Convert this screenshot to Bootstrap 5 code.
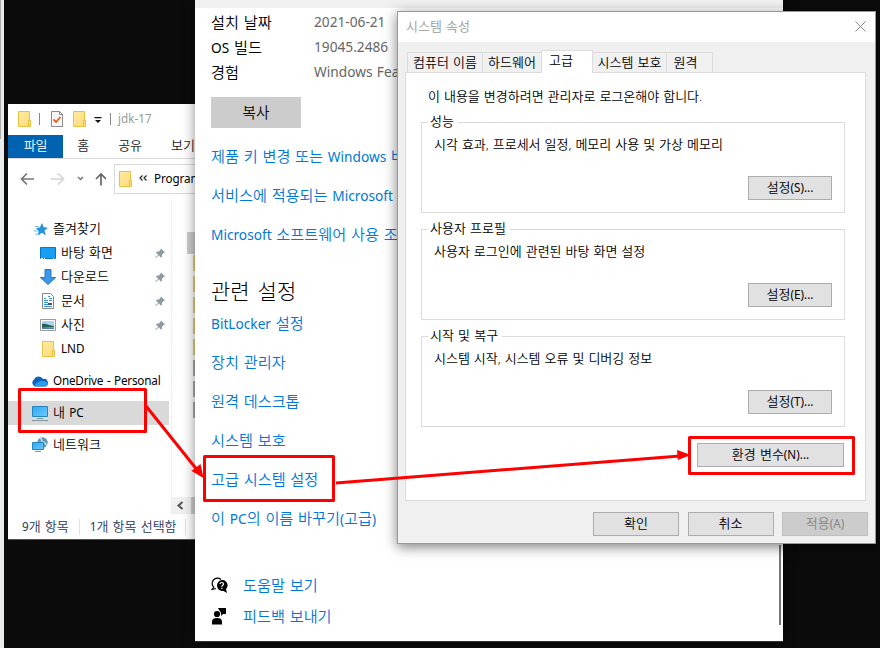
<!DOCTYPE html>
<html lang="ko">
<head>
<meta charset="utf-8">
<meta name="viewport" content="width=device-width, initial-scale=1">
<title>시스템 속성</title>
<link href="https://cdn.jsdelivr.net/npm/bootstrap@5.3.0/dist/css/bootstrap.min.css" rel="stylesheet">
<style>
html,body{height:648px;overflow:hidden}
body{font-family:"Noto Sans","Noto Sans CJK KR",sans-serif;font-size:13px;font-weight:350;line-height:1.2;color:#000;background:#0b0b0b;word-spacing:.8px;white-space:nowrap}
svg{display:block;flex:none}
.desk{width:880px;height:648px}
.edge{left:0;top:0;width:4px;height:648px;background:#e9eced}
.edge div{width:1px;height:139px;background:#aaa}
.lt{font-size:.9em;font-weight:400}
/* explorer */
.explorer{left:8px;top:104px;width:187px;height:436px;background:#fff;border-bottom:1px solid #555}
.ex-title{height:30px;color:#999}
.ex-tabs{height:24px;color:#222}
.ex-file{width:56px;height:23px;background:#0063b1;color:#fff}
.ex-addr{height:41px;border-top:1px solid #dadada}
.ex-box{width:90px;height:30px;border:1px solid #d9d9d9;border-right:0}
.ex-path{letter-spacing:-.1px;margin-bottom:2px}
.ex-side{width:164px;border-right:1px solid #f0f0f0;padding-top:18px}
.ex-row{height:24px;width:161px;padding-left:22px}
.ex-row>span{margin-bottom:1px}
.ex-sub{padding-left:32px}
.ex-name{margin-left:5px}
.ex-cloud{letter-spacing:-.2px}
.ex-on{background:#d9d9d9}
.ex-file-sel{width:8px;height:22px;background:#ccc;margin-top:33px}
.ex-item{width:2px;height:16px;margin-bottom:5px;background:#e6cf70}
.ex-doc{background:#aaa}
.ex-scroll{height:17px;background:#f0f0f0}
.ex-thumb{width:4px;background:#cdcdcd}
.ex-status{height:25px;color:#1f3b5c}
.ex-sep{width:1px;height:16px;background:#e2e2e2}
/* settings */
.setwin{left:195px;top:0;width:588px;height:642px;background:#fff;border-bottom:1px solid #333;font-size:15.2px;box-shadow:0 0 12px rgba(0,0,0,.45)}
.set-top{height:8px;background:#f0f0f0}
.set-body{padding-left:16px;padding-top:2px}
.set-info{height:25px}
.set-info>span:first-child{width:103px}
.set-val{color:#666;font-size:13.7px;font-weight:400}
.set-copy{width:90px;height:31px;background:#ccc;font-size:14.6px;margin:12px 0 9px}
.set-link{height:39px;color:#0078d7;text-decoration:none}
.set-head{font-size:21px;font-weight:300;height:36px;margin-top:20px;word-spacing:2.500px}
.set-bar{right:2px;top:545px;width:2px;height:80px;background:#777}
/* dialog */
.dlg{left:397px;top:11px;width:479px;height:533px;background:#f0f0f0;border:1px solid #999;box-shadow:0 3px 12px rgba(0,0,0,.5)}
.dlg-title{height:30px;background:#fff;color:#999;padding:0 9px 0 8px}
.dlg-tabs{height:30px;padding-left:9px}
.dlg-tab{height:20px;border:1px solid #dcdcdc;border-bottom:0;margin-right:-1px}
.dlg-tab.on{height:23px;background:#fff;position:relative;z-index:1;margin-bottom:-1px;padding:0 12px 3px 0}
.t1{width:76px}.t2{width:60px}.t3{width:52px}.t4{width:75px}.t5{width:47px;padding-right:8px}
.dlg-panel{height:429px;width:461px;margin-left:7px;border:1px solid #dcdcdc;background:#fff;padding:14px 20px 0 15px}
.dlg-intro{height:20px;padding-left:7px;word-spacing:.6px}
.grp{height:91px;width:424px;border:1px solid #dcdcdc;margin-bottom:16px;padding:0 12px 12px 12px}
.grp-name{height:18px;margin:-10px 0 0 -6px;background:#fff;padding:0 4px 0 2px;margin-right:auto}
.grp-text{margin-top:5px;height:18px;word-spacing:.6px}
.wbtn{height:24px;width:84px;border:1px solid #adadad;background:#e1e1e1}
.wide{width:147px;margin-right:1px}
.foot{width:86px}
.off{background:#ccc;border-color:#bfbfbf;color:#838383}
.marks{left:0;top:0}
</style>
<script src="https://cdn.jsdelivr.net/npm/bootstrap@5.3.0/dist/js/bootstrap.bundle.min.js"></script>
</head>
<body>
<svg width="0" height="0" class="position-absolute">
<defs>
<linearGradient id="fg" x1="0" y1="0" x2="1" y2="1"><stop offset="0" stop-color="#ffeaa3"/><stop offset="1" stop-color="#ffdb78"/></linearGradient>
<linearGradient id="sg" x1="0" y1="0" x2="1" y2="1"><stop offset="0" stop-color="#2aa9f2"/><stop offset="1" stop-color="#6fcaff"/></linearGradient>
<symbol id="folder" viewBox="0 0 13 16"><path d="M.5.5h11v9h1v6H.5z" fill="url(#fg)" stroke="#e8c341"/><path d="M10.500 15V9.500h2" fill="none" stroke="#e8c341"/></symbol>
<symbol id="pin" viewBox="0 0 11 11"><path d="M6.500 0 11 4.500 9.500 5 7.700 6.800 7.500 9.500 6.300 9.800 4 7.500.8 10.700.2 10.200 3.400 6.900 1.200 4.700 1.500 3.500 4.200 3.300 6 1.500z" fill="#8d99a1"/></symbol>
</defs></svg>
<main class="desk position-relative overflow-hidden">
<div class="edge position-absolute"><div></div></div>

<section class="explorer position-absolute d-flex flex-column overflow-hidden">
 <div class="ex-title d-flex align-items-center">
  <svg width="13" height="16" style="margin-left:10px"><use href="#folder"/></svg>
  <svg width="1" height="12" class="ms-2"><path d="M.5 0v12" stroke="#888"/></svg>
  <svg width="12" height="16" viewBox="0 0 12 16" style="margin-left:11px"><path d="M.5.5h8l3 3v12H.5z" fill="#f7f7f7" stroke="#8a8a8a"/><path d="M8.500.5v3h3" fill="none" stroke="#8a8a8a"/><path d="M2.500 8.500 5 11l4.500-5" fill="none" stroke="#e8591c" stroke-width="1.800"/></svg>
  <svg width="13" height="16" style="margin-left:10px"><use href="#folder"/></svg>
  <svg width="8" height="7" viewBox="0 0 8 7" style="margin:2px 0 0 8px"><path d="M.5 0h7v1.200h-7zM1 3h6L4 6z" fill="#111"/></svg>
  <svg width="1" height="12" style="margin-left:8px"><path d="M.5 0v12" stroke="#888"/></svg>
  <span style="margin-left:7px"><span class="lt">jdk-17</span></span>
 </div>
 <div class="ex-tabs d-flex align-items-center">
  <span class="ex-file d-flex align-items-center justify-content-center">파일</span><span style="margin-left:14px">홈</span><span style="margin-left:29px">공유</span><span style="margin-left:29px">보기</span>
 </div>
 <div class="ex-addr d-flex align-items-center">
  <svg width="98" height="20" viewBox="0 0 98 20" fill="none" stroke-width="1.700"><path d="M26 10H14M19 4.500 13.500 10l5.500 5.500" stroke="#777"/><path d="M43 10h12M50 4.500l5.500 5.500-5.500 5.500" stroke="#d5d5d5"/><path d="m70 8 2.500 2.500L75 8" stroke="#777" stroke-width="1.500"/><path d="M93 16.500V5.500M88 10l5-5 5 5" stroke="#666"/></svg>
  <div class="ex-box d-flex align-items-center" style="margin-left:8px"><svg width="13" height="16" class="ms-1"><use href="#folder"/></svg><svg width="8" height="6" viewBox="0 0 8 6" style="margin:0 7px 2px 7px" fill="none" stroke="#222" stroke-width="1.200"><path d="M3.500.5 1 3l2.500 2.500M7.500.5 5 3l2.500 2.500"/></svg><span class="lt ex-path">Program</span></div>
 </div>
 <div class="d-flex flex-grow-1">
  <div class="ex-side flex-shrink-0">
   <div class="ex-row d-flex align-items-center" style="padding-left:26px"><svg width="14" height="13" viewBox="0 0 14 13"><path d="M8 0 9.700 4.300 14 4.700 10.500 7.600 11.800 12.500 8 9.700 4 12.500 4.600 8.200 2 5.500 6 4.300z" fill="#2492dd"/><path d="M1 3.500h3.500M0 8h3M1 11h3" stroke="#63bcf3"/></svg><span class="ex-name">즐겨찾기</span></div>
   <div class="ex-row ex-sub d-flex align-items-center"><svg width="16" height="12" viewBox="0 0 16 12"><path d="M.5.5h15v11H.5z" fill="#189ff5" stroke="#0876c2"/><path d="M1 11.500h14" stroke="#fff" stroke-dasharray="2 1 1 8 1 1"/></svg><span class="ex-name">바탕 화면</span><svg width="10" height="11" class="ms-auto me-1"><use href="#pin"/></svg></div>
   <div class="ex-row ex-sub d-flex align-items-center"><svg width="16" height="16" viewBox="0 0 16 16"><path d="M5 .5h6v8h4.500L8 15.500.500 8.500H5z" fill="#3d97e8" stroke="#2079cb"/></svg><span class="ex-name">다운로드</span><svg width="10" height="11" class="ms-auto me-1"><use href="#pin"/></svg></div>
   <div class="ex-row ex-sub d-flex align-items-center"><svg width="16" height="16" viewBox="0 0 16 16"><path d="M2.500.5h8l3 3v12h-11z" fill="#fff" stroke="#888"/><path d="M4 5.500h2M8 3.500h2M4 7.500h4M9 5.500h3M4 9.500h4M9 7.500h3M4 11.500h8M4 13.500h8" stroke="#3593cc"/><path d="M8 10h4v2H8z" fill="#456"/></svg><span class="ex-name">문서</span><svg width="10" height="11" class="ms-auto me-1"><use href="#pin"/></svg></div>
   <div class="ex-row ex-sub d-flex align-items-center"><svg width="16" height="12" viewBox="0 0 16 12"><path d="M.5.5h15v11H.5z" fill="#fff" stroke="#999"/><path d="M2 2h12v8H2z" fill="#a9d3f0"/><path d="M2 5c4-1 5 1 12 2v1L2 9z" fill="#2d5e55"/><path d="M2 8.500h12V10H2z" fill="#4a83b0"/></svg><span class="ex-name">사진</span><svg width="10" height="11" class="ms-auto me-1"><use href="#pin"/></svg></div>
   <div class="ex-row ex-sub d-flex align-items-center mb-2"><svg width="16" height="16" viewBox="0 0 16 16"><use href="#folder" x="2" width="13" height="16"/></svg><span class="ex-name lt">LND</span></div>
   <div class="ex-row d-flex align-items-center mb-2" style="padding-left:23px"><svg width="17" height="11" viewBox="0 0 17 11"><path d="M4 10.500A4 4 0 0 1 3 3.500 5 5 0 0 1 12 3a3.800 3.800 0 0 1 2 7.500z" fill="#0a63b8"/><path d="M3 10.500C4 7 8 5 11.500 5c3-.5 5 1 5 3.200 0 1.500-1 2.300-2.500 2.300z" fill="#2a9de8"/></svg><span class="ex-name ex-cloud lt">OneDrive - Personal</span></div>
   <div class="ex-row ex-on d-flex align-items-center mb-2" style="padding-left:24px"><svg width="16" height="15" viewBox="0 0 16 15"><path d="M.5.5h15v10H.5z" fill="url(#sg)" stroke="#2585bd"/><path d="M5 12.500h6M0 14.500h16" stroke="#7d96a5"/></svg><span class="ex-name">내 <span class="lt">PC</span></span></div>
   <div class="ex-row d-flex align-items-center" style="padding-left:24px"><svg width="16" height="16" viewBox="0 0 16 16"><circle cx="10.500" cy="5.500" r="5.200" fill="#5c9ab8"/><path d="M8 1c3 1 0 3 3 4s3 3 4 3" stroke="#c4dce8" stroke-width="1.500" fill="none"/><path d="M.5 5.500h11v7H.5z" fill="url(#sg)" stroke="#2585bd"/><path d="M3 14.500h6" stroke="#7d96a5"/></svg><span class="ex-name">네트워크</span></div>
  </div>
  <div class="d-flex flex-column flex-grow-1">
   <div class="d-flex flex-column align-items-end">
    <div class="ex-file-sel"></div>
    <div class="ex-item" style="margin-top:1px"></div><div class="ex-item"></div><div class="ex-item"></div><div class="ex-item"></div><div class="ex-item"></div><div class="ex-item ex-doc"></div><div class="ex-item ex-doc"></div><div class="ex-item ex-doc"></div>
   </div>
   <div class="ex-scroll mt-auto d-flex"><svg width="17" height="17" viewBox="0 0 17 17"><path d="m10.500 5-4 3.500 4 3.500" fill="none" stroke="#555" stroke-width="2"/></svg><div class="ex-thumb ms-auto"></div></div>
  </div>
 </div>
 <div class="ex-status d-flex align-items-center"><span style="margin-left:14px"><span class="lt">9</span>개 항목</span><span class="ex-sep" style="margin:0 10px 0 10px"></span><span><span class="lt">1</span>개 항목 선택함</span><span class="ex-sep ms-2"></span></div>
</section>

<section class="setwin position-absolute">
 <div class="set-top"></div>
 <div class="set-body">
  <div class="set-info d-flex align-items-center"><span>설치 날짜</span><span class="set-val">2021-06-21</span></div>
  <div class="set-info d-flex align-items-center"><span><span class="lt">OS</span> 빌드</span><span class="set-val">19045.2486</span></div>
  <div class="set-info d-flex align-items-center"><span>경험</span><span class="set-val">Windows Fea</span></div>
  <div class="set-copy d-flex align-items-center justify-content-center">복사</div>
  <a class="set-link d-flex align-items-center"><span>제품 키 변경 또는 <span class="lt">Windows</span> 버</span></a>
  <a class="set-link d-flex align-items-center"><span>서비스에 적용되는 <span class="lt">Microsoft</span></span></a>
  <a class="set-link d-flex align-items-center"><span><span class="lt">Microsoft</span> 소프트웨어 사용 조</span></a>
  <div class="set-head d-flex align-items-center">관련 설정</div>
  <a class="set-link d-flex align-items-center" style="margin-top:-6px"><span><span class="lt">BitLocker</span> 설정</span></a>
  <a class="set-link d-flex align-items-center">장치 관리자</a>
  <a class="set-link d-flex align-items-center">원격 데스크톱</a>
  <a class="set-link d-flex align-items-center">시스템 보호</a>
  <a class="set-link d-flex align-items-center">고급 시스템 설정</a>
  <a class="set-link d-flex align-items-center"><span>이 <span class="lt">PC</span>의 이름 바꾸기<span class="lt">(</span>고급<span class="lt">)</span></span></a>
  <div class="d-flex align-items-center" style="height:31px;margin-top:32px"><svg width="17" height="17" viewBox="0 0 17 17"><path d="M3 10.500A5.200 5.200 0 1 1 10 2.500M3 10l-2 2.500 4-1" fill="none" stroke="#000" stroke-width="1.200"/><path d="M10.700 3a5.300 5.300 0 0 1 4.300 9l1 4-3.500-2A5.300 5.300 0 1 1 10.700 3z"/><path d="M9 7c0-2 3.500-2 3.500 0 0 1.300-1.700 1.300-1.700 2.700m0 1v1.300" stroke="#fff" stroke-width="1.200" fill="none"/></svg><a class="set-link d-flex align-items-center" style="margin-left:15px">도움말 보기</a></div>
  <div class="d-flex align-items-center" style="height:31px"><svg width="17" height="17" viewBox="0 0 17 17"><path d="M7 0h8v6h-3l-2 2V6L9 4z"/><circle cx="6" cy="6" r="3.900" fill="#fff"/><circle cx="6" cy="6" r="3.100"/><path d="M1 16.500v-3C1 11 3 10 6 10s5 1 5 3.500v3z"/></svg><a class="set-link d-flex align-items-center" style="margin-left:15px">피드백 보내기</a></div>
 </div>
 <div class="set-bar position-absolute"></div>
</section>

<section class="dlg position-absolute">
 <div class="dlg-title d-flex align-items-center justify-content-between"><span>시스템 속성</span><svg width="11" height="11" viewBox="0 0 11 11" style="margin-top:-2px"><path d="m.5.5 10 10m0-10-10 10" stroke="#888"/></svg></div>
 <div class="dlg-tabs d-flex align-items-end">
  <div class="dlg-tab t1 d-flex align-items-center justify-content-center">컴퓨터 이름</div>
  <div class="dlg-tab t2 d-flex align-items-center justify-content-center">하드웨어</div>
  <div class="dlg-tab t3 on d-flex align-items-center justify-content-center">고급</div>
  <div class="dlg-tab t4 d-flex align-items-center justify-content-center">시스템 보호</div>
  <div class="dlg-tab t5 d-flex align-items-center justify-content-center">원격</div>
 </div>
 <div class="dlg-panel">
  <div class="dlg-intro d-flex align-items-center">이 내용을 변경하려면 관리자로 로그온해야 합니다.</div>
  <div class="grp d-flex flex-column" style="margin-top:15px"><div class="grp-name d-flex align-items-center">성능</div><div class="grp-text d-flex align-items-center">시각 효과, 프로세서 일정, 메모리 사용 및 가상 메모리</div><div class="wbtn d-flex align-items-center justify-content-center ms-auto mt-auto"><span>설정<span class="lt">(S)...</span></span></div></div>
  <div class="grp d-flex flex-column"><div class="grp-name d-flex align-items-center">사용자 프로필</div><div class="grp-text d-flex align-items-center">사용자 로그인에 관련된 바탕 화면 설정</div><div class="wbtn d-flex align-items-center justify-content-center ms-auto mt-auto"><span>설정<span class="lt">(E)...</span></span></div></div>
  <div class="grp d-flex flex-column"><div class="grp-name d-flex align-items-center">시작 및 복구</div><div class="grp-text d-flex align-items-center">시스템 시작, 시스템 오류 및 디버깅 정보</div><div class="wbtn d-flex align-items-center justify-content-center ms-auto mt-auto"><span>설정<span class="lt">(T)...</span></span></div></div>
  <div class="wbtn wide d-flex align-items-center justify-content-center ms-auto"><span>환경 변수<span class="lt">(N)...</span></span></div>
 </div>
 <div class="d-flex justify-content-end" style="gap:8.500px;padding:11px 7px 0 0"><div class="wbtn foot d-flex align-items-center justify-content-center">확인</div><div class="wbtn foot d-flex align-items-center justify-content-center">취소</div><div class="wbtn foot off d-flex align-items-center justify-content-center"><span>적용<span class="lt">(A)</span></span></div></div>
</section>

<svg class="marks position-absolute" width="880" height="648" fill="none" stroke="#f00" stroke-width="3" stroke-linejoin="round">
<path d="M19.500 389.500h126v42h-126zM204.500 456.500h129v44h-129zM689.500 437.500h164v36h-164zM146 406l52 65M336 483l344-27"/>
<path d="M203.500 478l-12-7 9-7zM691 455l-14-5 .8 10z" fill="#f00" stroke="none"/>
</svg>
</main>
</body>
</html>
